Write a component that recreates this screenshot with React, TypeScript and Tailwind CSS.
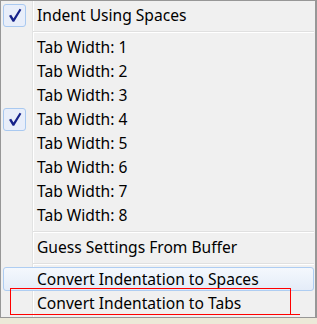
import React from "react";

type Item = { label: string; checked?: boolean; hover?: boolean };

const Check = () => (
    <div className="-ml-px w-[23px] h-[23px] shrink-0 flex items-center justify-center rounded-[3px] border border-[#a9c9f0] bg-[#e8eefa]">
        <svg width="21" height="21" viewBox="0 0 21 21">
            <path
                d="M5 10.8 L7.2 9.8 L9.5 13.6 L15.6 3.8 L17.4 4.8 L10.2 16.8 L8.6 16.8 Z"
                fill="#16228a"
            />
        </svg>
    </div>
);

const Row: React.FC<Item> = ({ label, checked, hover }) => (
    <div
        className={`ml-[2px] mr-[1px] h-6 flex items-center rounded-[3px] border ${
            hover
                ? "border-[#aecdf2] bg-[linear-gradient(to_bottom,#f4f8fd,#e4ecf8)]"
                : "border-transparent"
        }`}
    >
        {checked ? <Check /> : <div className="-ml-px w-[23px] shrink-0" />}
        <span className="ml-[11px] pt-[2px] whitespace-nowrap text-[15.6px] leading-none text-black">
            {label}
        </span>
    </div>
);

const Separator = () => (
    <div className="h-[8px] pt-[4px] ml-[32px] mr-[1px]">
        <div className="h-px bg-[#e0e0e0]" />
        <div className="h-px bg-white" />
    </div>
);

export default function App() {
    const tabs = [1, 2, 3, 4, 5, 6, 7, 8];

    return (
        <div
            className="relative w-[317px] h-[324px] bg-[#ece9d8] overflow-hidden"
            style={{ fontFamily: '"Noto Sans", "Open Sans", sans-serif' }}
        >
            <div className="w-[317px] h-[318px] border-l border-t border-b border-r-2 border-[#979797] pt-[2px] pb-[2px] bg-[linear-gradient(to_right,#f0f0f0_31px,#e2e3e3_31px,#e2e3e3_32px,#ffffff_32px,#ffffff_33px,#f0f0f0_33px)]">
                <Row label="Indent Using Spaces" checked />
                <Separator />
                {tabs.map((n) => (
                    <Row key={n} label={`Tab Width: ${n}`} checked={n === 4} />
                ))}
                <Separator />
                <Row label="Guess Settings From Buffer" />
                <Separator />
                <Row label="Convert Indentation to Spaces" hover />
                <Row label="Convert Indentation to Tabs" />
            </div>

            {/* red annotation box */}
            <div className="absolute left-[10px] top-[288px] w-[281px] h-[27px] border-t border-l border-r border-[#ff0000]" />
            <div className="absolute left-[10px] top-[314px] w-[290px] h-px bg-[#ff0000]" />
        </div>
    );
}
